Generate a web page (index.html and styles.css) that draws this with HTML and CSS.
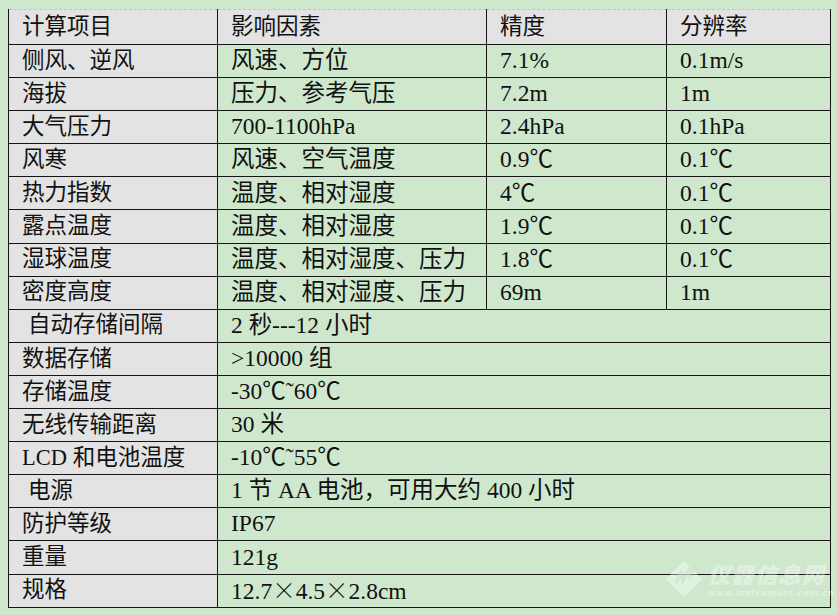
FILE: index.html
```html
<!DOCTYPE html>
<html lang="zh">
<head>
<meta charset="utf-8">
<link rel="stylesheet" href="styles.css">
</head>
<body>
<div class="page">
<table class="spec">
<colgroup><col class="c1"><col class="c2"><col class="c3"><col class="c4"></colgroup>
<tr class="head"><td>计算项目</td><td>影响因素</td><td>精度</td><td>分辨率</td></tr>
<tr><td class="k">侧风、逆风</td><td>风速、方位</td><td>7.1%</td><td>0.1m/s</td></tr>
<tr><td class="k">海拔</td><td>压力、参考气压</td><td>7.2m</td><td>1m</td></tr>
<tr><td class="k">大气压力</td><td>700-1100hPa</td><td>2.4hPa</td><td>0.1hPa</td></tr>
<tr><td class="k">风寒</td><td>风速、空气温度</td><td>0.9℃</td><td>0.1℃</td></tr>
<tr><td class="k">热力指数</td><td>温度、相对湿度</td><td>4℃</td><td>0.1℃</td></tr>
<tr><td class="k">露点温度</td><td>温度、相对湿度</td><td>1.9℃</td><td>0.1℃</td></tr>
<tr><td class="k">湿球温度</td><td>温度、相对湿度、压力</td><td>1.8℃</td><td>0.1℃</td></tr>
<tr><td class="k">密度高度</td><td>温度、相对湿度、压力</td><td>69m</td><td>1m</td></tr>
<tr><td class="k ind">自动存储间隔</td><td colspan="3">2 秒---12 小时</td></tr>
<tr><td class="k">数据存储</td><td colspan="3">&gt;10000 组</td></tr>
<tr><td class="k">存储温度</td><td colspan="3">-30℃˜60℃</td></tr>
<tr><td class="k">无线传输距离</td><td colspan="3">30 米</td></tr>
<tr><td class="k">LCD 和电池温度</td><td colspan="3">-10℃˜55℃</td></tr>
<tr><td class="k ind">电源</td><td colspan="3">1 节 AA 电池，可用大约 400 小时</td></tr>
<tr><td class="k">防护等级</td><td colspan="3">IP67</td></tr>
<tr><td class="k">重量</td><td colspan="3">121g</td></tr>
<tr><td class="k">规格</td><td colspan="3">12.7<span class="cjk">×</span>4.5<span class="cjk">×</span>2.8cm</td></tr>
</table>
<div class="mark">
<svg class="mark-icon" width="40" height="40" viewBox="0 0 40 40">
<path d="M20 2 L38 20 L20 38 L2 20 Z" fill="#ffffff" fill-opacity="0.5"/>
<path d="M12 24 L17 14 L19 22 L24 12 L26 20" stroke="#cfe8cd" stroke-width="3" fill="none"/>
<circle cx="27" cy="11" r="3" fill="#cfe8cd"/>
</svg>
<div class="mark-text">
<div class="mark-cn">仪器信息网</div>
<div class="mark-url">www.instrument.com.cn</div>
</div>
</div>
</div>
</body>
</html>
```

FILE: styles.css
```css
html, body {
  margin: 0;
  padding: 0;
  background: #cfe8cd;
}
.page {
  position: relative;
  width: 837px;
  height: 615px;
  padding: 9px 0 0 8px;
  box-sizing: border-box;
}
.spec {
  border-collapse: collapse;
  table-layout: fixed;
  width: 822px;
  font-family: "Liberation Serif", "Noto Sans CJK SC", serif;
  font-size: 23.5px;
  color: #111;
}
.c1 { width: 209px; }
.c2 { width: 269px; }
.c3 { width: 180px; }
.c4 { width: 164px; }
.spec td {
  border: 1px solid #151515;
  height: 33.1px;
  padding: 0 0 0 13px;
  box-sizing: border-box;
  vertical-align: middle;
  white-space: nowrap;
  background: #cfe8cd;
  line-height: 1.1;
}
.spec td.k {
  background: #e3e3e3;
  font-size: 22.5px;
}
.spec .head td {
  background: #e3e3e3;
  font-size: 22.5px;
  height: 35px;
  border-top: 1px dashed #c4c4c4;
}
.spec td.ind {
  padding-left: 19px;
}
.cjk {
  font-family: "Noto Sans CJK SC", sans-serif;
  font-weight: 300;
}
.mark {
  position: absolute;
  left: 664px;
  top: 558px;
  display: flex;
  align-items: center;
  gap: 4px;
  white-space: nowrap;
  opacity: 0.75;
}
.mark-cn {
  font-family: "Noto Sans CJK SC", sans-serif;
  font-weight: 900;
  font-style: italic;
  font-size: 22px;
  line-height: 30px;
  color: rgba(255, 255, 255, 0.55);
  letter-spacing: 1.5px;
}
.mark-url {
  font-family: "DejaVu Sans", sans-serif;
  font-weight: bold;
  font-style: italic;
  font-size: 8px;
  line-height: 10px;
  margin-top: 1px;
  color: rgba(255, 255, 255, 0.55);
  letter-spacing: 0.8px;
}
```
